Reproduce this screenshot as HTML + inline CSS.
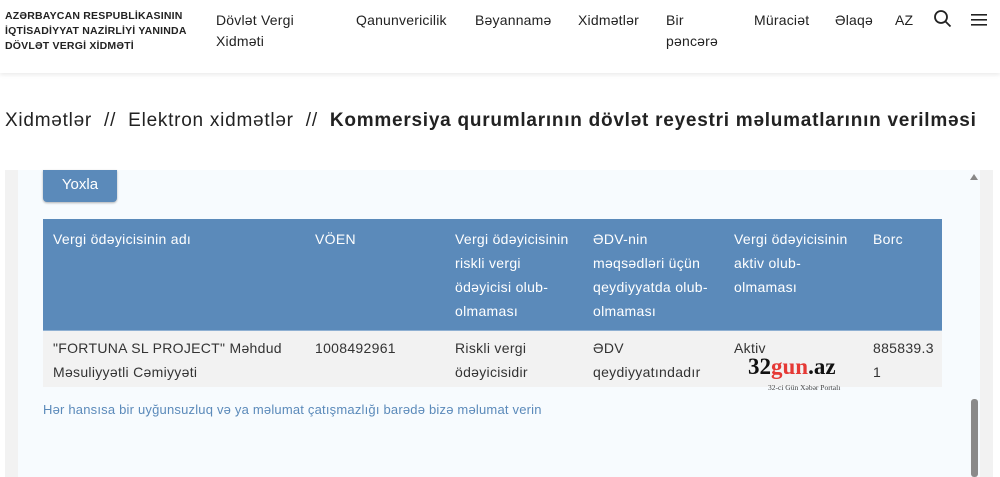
<!DOCTYPE html>
<html><head><meta charset="utf-8"><style>
*{margin:0;padding:0;box-sizing:border-box}
body{width:1000px;height:477px;overflow:hidden;background:#fff;font-family:"Liberation Sans","DejaVu Sans",sans-serif;position:relative}
.hdr{position:absolute;left:0;top:0;width:1000px;height:73px;background:#fff;box-shadow:0 2px 4px rgba(0,0,0,.08)}
.logo{position:absolute;left:5px;top:9px;font-size:10.5px;font-weight:bold;line-height:15px;color:#222;letter-spacing:.2px}
.nav{position:absolute;top:10px;font-size:14px;color:#222;line-height:21px;letter-spacing:.2px}
.bc{position:absolute;left:5px;top:110px;font-size:19px;color:#222;white-space:nowrap;letter-spacing:.75px}
.bc b{font-weight:bold}
.panel{position:absolute;left:5px;top:170px;width:988px;height:307px;background:#f2f2f2}
.inner{position:absolute;left:18px;top:170px;width:962px;height:307px;background:#f7fbfe}
.btn{position:absolute;left:43px;top:170px;width:74px;height:32px;background:#5b8aba;border-radius:0 0 4px 4px;color:#fff;font-size:15px;text-align:center;line-height:30px;box-shadow:0 1px 2px rgba(0,0,0,.3)}
.th{position:absolute;left:43px;top:219px;width:899px;height:111px;background:#5b8aba}
.tr{position:absolute;left:43px;top:330px;width:899px;height:57px;background:#f2f2f2;border-top:1px solid #8fb0d2}
.c{position:absolute;font-size:14px;line-height:24px;letter-spacing:.3px}
.h{color:#fff;top:227px}
.d{color:#333;top:336px}
.note{position:absolute;left:43px;top:402px;font-size:13px;color:#5b8aba;letter-spacing:.2px}
</style></head><body>
<div class="hdr">
<div class="logo">AZƏRBAYCAN RESPUBLİKASININ<br>İQTİSADİYYAT NAZİRLİYİ YANINDA<br>DÖVLƏT VERGİ XİDMƏTİ</div>
<div class="nav" style="left:216px">Dövlət Vergi<br>Xidməti</div>
<div class="nav" style="left:356px">Qanunvericilik</div>
<div class="nav" style="left:475px">Bəyannamə</div>
<div class="nav" style="left:578px">Xidmətlər</div>
<div class="nav" style="left:666px">Bir<br>pəncərə</div>
<div class="nav" style="left:754px">Müraciət</div>
<div class="nav" style="left:835px">Əlaqə</div>
<div class="nav" style="left:895px">AZ</div>
<svg style="position:absolute;left:933px;top:9px" width="19" height="19" viewBox="0 0 19 19"><circle cx="8" cy="8" r="6" fill="none" stroke="#222" stroke-width="1.8"/><line x1="12.5" y1="12.5" x2="17.5" y2="17.5" stroke="#222" stroke-width="1.8"/></svg>
<svg style="position:absolute;left:971px;top:14px" width="16" height="12"><rect y="0" width="16" height="1.6" fill="#222"/><rect y="5" width="16" height="1.6" fill="#222"/><rect y="10" width="16" height="1.6" fill="#222"/></svg>
</div>
<div class="bc">Xidmətlər &nbsp;//&nbsp; Elektron xidmətlər &nbsp;//&nbsp; <b>Kommersiya qurumlarının dövlət reyestri məlumatlarının verilməsi</b></div>
<div class="panel"></div><div class="inner"></div>
<div style="position:absolute;left:970px;top:174px;width:0;height:0;border-left:4px solid transparent;border-right:4px solid transparent;border-bottom:6px solid #888"></div>
<div style="position:absolute;left:971px;top:399px;width:7px;height:78px;background:#8a8a8a;border-radius:3px"></div>
<div class="btn">Yoxla</div>
<div class="th"></div>
<div class="c h" style="left:53px">Vergi ödəyicisinin adı</div>
<div class="c h" style="left:315px">VÖEN</div>
<div class="c h" style="left:455px">Vergi ödəyicisinin<br>riskli vergi<br>ödəyicisi olub-<br>olmaması</div>
<div class="c h" style="left:593px">ƏDV-nin<br>məqsədləri üçün<br>qeydiyyatda olub-<br>olmaması</div>
<div class="c h" style="left:734px">Vergi ödəyicisinin<br>aktiv olub-<br>olmaması</div>
<div class="c h" style="left:873px">Borc</div>
<div class="tr"></div>
<div class="c d" style="left:53px">"FORTUNA SL PROJECT" Məhdud<br>Məsuliyyətli Cəmiyyəti</div>
<div class="c d" style="left:315px">1008492961</div>
<div class="c d" style="left:455px">Riskli vergi<br>ödəyicisidir</div>
<div class="c d" style="left:593px">ƏDV<br>qeydiyyatındadır</div>
<div class="c d" style="left:734px">Aktiv</div>
<div class="c d" style="left:873px">885839.3<br>1</div>
<div style="position:absolute;left:748px;top:355px;font-family:'Liberation Serif',serif;font-weight:bold;font-size:23px;color:#111;line-height:24px">32<span style="color:#e53935">gun</span>.az</div>
<div style="position:absolute;left:768px;top:383px;font-family:'Liberation Serif',serif;font-size:7.5px;color:#444">32-ci Gün Xəbər Portalı</div>
<div class="note">Hər hansısa bir uyğunsuzluq və ya məlumat çatışmazlığı barədə bizə məlumat verin</div>
</body></html>
